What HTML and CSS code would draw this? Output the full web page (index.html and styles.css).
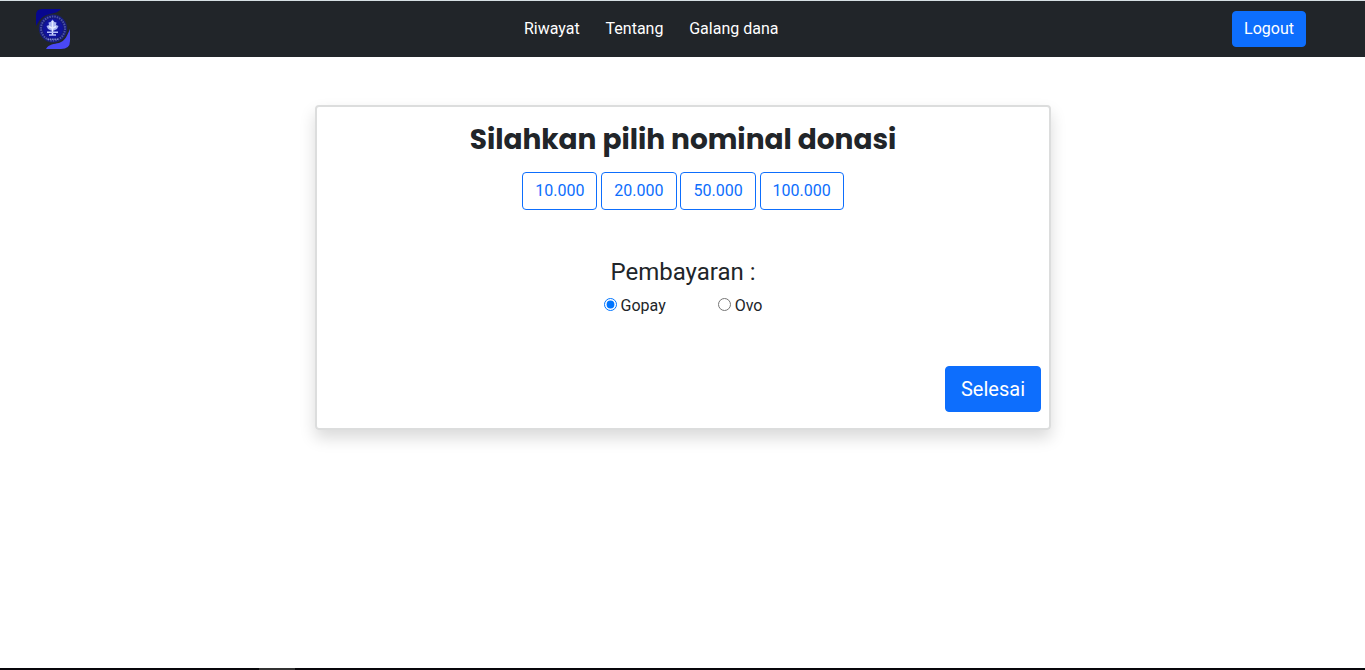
FILE: index.html
```html
<!DOCTYPE html>
<html lang="id">
<head>
<meta charset="utf-8">
<title>Donasi</title>
<link rel="stylesheet" href="styles.css">
</head>
<body>
<nav class="navbar">
  <a class="brand" href="#">
    <svg class="logo" width="34" height="40" viewBox="0 0 34 40">
      <path d="M0 15V6Q0 0 6 0H25C22 4 17 4 11 6C5 8 3 12 0 17Z" fill="#07078f"/>
      <path d="M34 20V32Q34 40 25 40H10C13 35 18 35 23 34C29 32 31 27 34 20Z" fill="#4a48f5"/>
      <circle cx="17" cy="19.500" r="14.300" fill="#212a50"/>
      <circle cx="17" cy="19.500" r="13.800" fill="#14177c"/>
      <circle cx="17" cy="19.500" r="12" fill="none" stroke="#4d56a6" stroke-width="2" stroke-dasharray="1.500 1"/>
      <circle cx="17" cy="19.500" r="10" fill="#10139c"/>
      <path d="M16.500 10.500L18.500 13L20.500 13.500L20 16L22.500 17L21 20L18 21.500H15L12 20L10.500 17L13 16L12.500 13.500L14.500 13Z" fill="#aab5f0"/>
      <path d="M16.500 12V26M13 17.500L16.500 19.500L20 17.500" fill="none" stroke="#e3e9ff" stroke-width="1.500"/>
      <path d="M11 23.300H22M13 26H20" stroke="#b4bff8" stroke-width="1.400"/>
      <path d="M11.500 30.300H22" stroke="#7d87d0" stroke-width="1.500" stroke-dasharray="1.500 .8"/>
    </svg>
  </a>
  <div class="links">
    <a href="#">Riwayat</a>
    <a href="#">Tentang</a>
    <a href="#">Galang dana</a>
  </div>
  <button class="btn logout">Logout</button>
</nav>
<main class="page">
  <form class="card">
    <h1 class="title">Silahkan pilih nominal donasi</h1>
    <div class="amounts">
      <button type="button" class="btn outline">10.000</button>
      <button type="button" class="btn outline">20.000</button>
      <button type="button" class="btn outline">50.000</button>
      <button type="button" class="btn outline">100.000</button>
    </div>
    <h2 class="subtitle">Pembayaran :</h2>
    <div class="methods">
      <label class="method"><input type="radio" name="pay" checked>Gopay</label>
      <label class="method"><input type="radio" name="pay">Ovo</label>
    </div>
    <button type="button" class="btn submit">Selesai</button>
  </form>
</main>
<footer class="taskbar"><span class="task"></span></footer>
</body>
</html>
```
FILE: styles.css
```css
* { box-sizing: border-box; }
body {
  margin: 0;
  height: 670px;
  display: flex;
  flex-direction: column;
  overflow: hidden;
  background: #fff;
  color: #212529;
  font: 16px/24px Roboto, sans-serif;
}
.navbar {
  height: 57px;
  flex: none;
  display: grid;
  grid-template-columns: 488px auto 1fr;
  align-items: center;
  padding: 0 59px 0 36px;
  border-top: 1px solid #d6dfe3;
  background: #212529;
}
.brand { display: flex; }
.links {
  display: flex;
  gap: 25.8px;
}
.links a {
  color: #fff;
  text-decoration: none;
  white-space: nowrap;
}
.btn {
  border: 1px solid #0d6efd;
  border-radius: 4px;
  background: #0d6efd;
  color: #fff;
  font: 16px/24px Roboto, sans-serif;
  padding: 6px 12px;
}
.logout {
  justify-self: end;
  height: 36px;
  padding: 5px 11px;
}
.page {
  flex: 1;
  padding-top: 48px;
}
.card {
  width: 736px;
  height: 325px;
  margin-left: 315px;
  display: flex;
  flex-direction: column;
  align-items: center;
  padding: 16px 8px;
  border: 2px solid #dcdddd;
  border-radius: 4px;
  box-shadow: 0 8px 16px rgba(0, 0, 0, .15);
}
.title {
  margin: 0 0 15px;
  font: 700 28px/34px Poppins, Inter, sans-serif;
  white-space: nowrap;
}
.amounts {
  display: flex;
  gap: 3.95px;
}
.outline {
  height: 38px;
  background: #fff;
  color: #0d6efd;
}
.subtitle {
  margin: 48px 0 7px;
  font-size: 24px;
  font-weight: 400;
  line-height: 29px;
}
.methods {
  display: flex;
  gap: 52px;
}
.method {
  display: flex;
  align-items: center;
}
.method input {
  width: 13px;
  height: 13px;
  margin: 0 4px 3px 0;
}
.submit {
  align-self: flex-end;
  margin-top: auto;
  height: 46px;
  padding: 7px 15px;
  font-size: 20px;
  line-height: 30px;
}
.taskbar {
  height: 2px;
  flex: none;
  padding-left: 259px;
  background: #08070b;
}
.task {
  display: block;
  width: 36px;
  height: 2px;
  background: #333;
}
```
